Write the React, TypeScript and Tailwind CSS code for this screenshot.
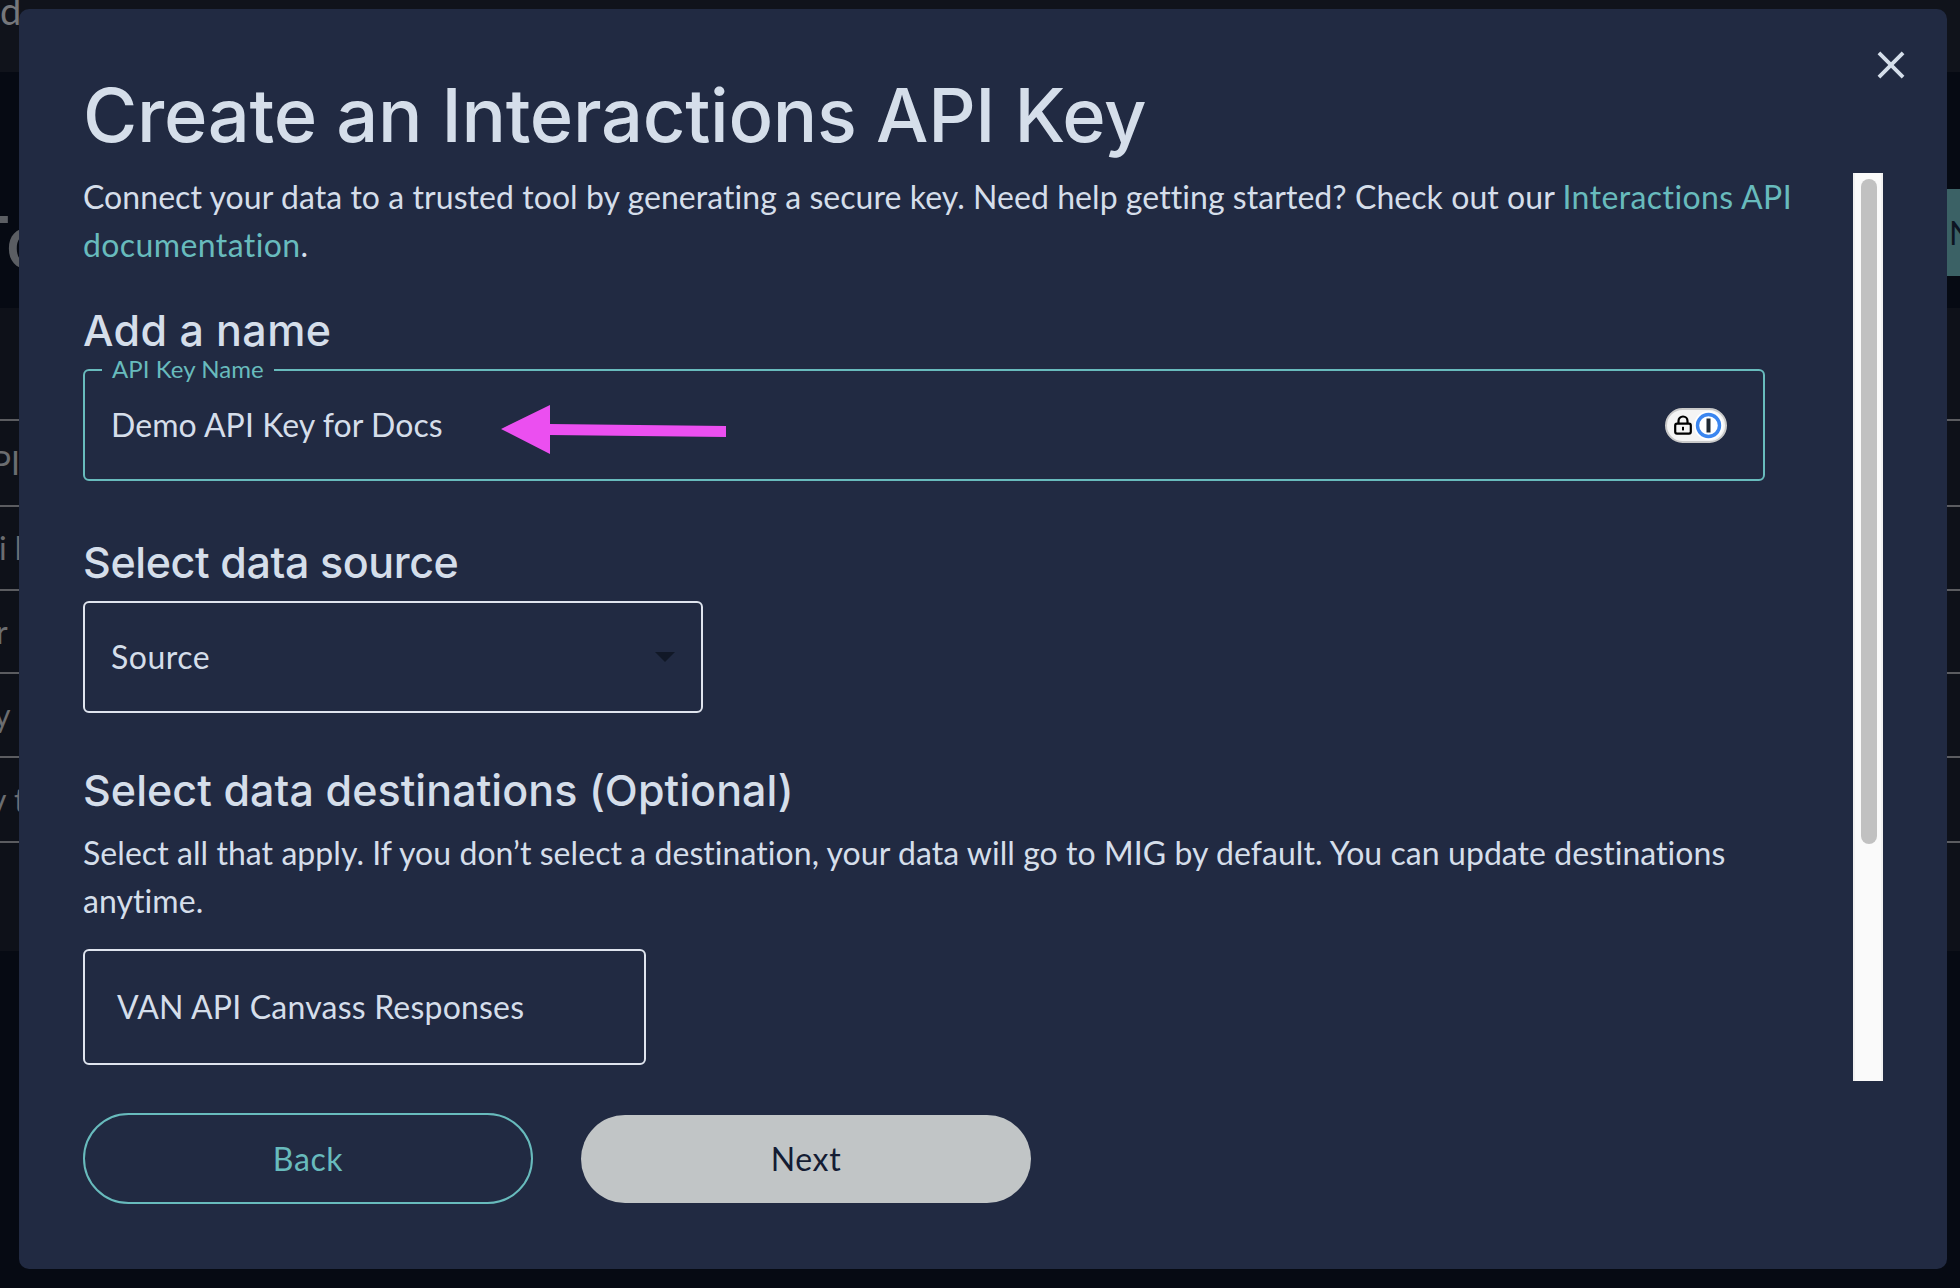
import React from 'react';

const tableRows = [
  { label: 'API', height: 'h-[86px]', offset: '-ml-[30px]' },
  { label: 'i k', height: 'h-[84px]', offset: '-ml-[1px]' },
  { label: 'r', height: 'h-[83px]', offset: '-ml-[4px]' },
  { label: 'y', height: 'h-[84px]', offset: '-ml-[6px]' },
  { label: 'v t', height: 'h-[85px]', offset: '-ml-[10px]' },
];

const OnePasswordPill: React.FC = () => (
  <div className="w-[62px] h-[35px] rounded-full bg-[#f4f4f4] border-2 border-[#c9c9c9] flex items-center justify-between pl-[7px] pr-[2px]">
    <svg width="18" height="20" viewBox="0 0 18 20" fill="none">
      <path d="M4.5 9V6a4.5 4.5 0 0 1 9 0v3" stroke="#000" strokeWidth="2.2" />
      <rect x="1.2" y="8.6" width="15.6" height="10" rx="1.8" stroke="#000" strokeWidth="2.2" />
      <rect x="8" y="11.8" width="2" height="3.6" fill="#000" />
    </svg>
    <svg width="29" height="29" viewBox="0 0 29 29">
      <circle cx="14.5" cy="14.5" r="14.5" fill="#fff" />
      <circle cx="14.5" cy="14.5" r="11" fill="#fff" stroke="#3b86f0" strokeWidth="3.4" />
      <rect x="12.5" y="7.5" width="4" height="14" fill="#1f2933" />
    </svg>
  </div>
);

const App: React.FC = () => {
  return (
    <div className="relative w-[1960px] h-[1288px] overflow-hidden bg-[#060a13] font-['Lato',sans-serif]">
      {/* page behind the dialog */}
      <div className="h-[72px] bg-[#10131b] overflow-hidden">
        <span className="block -mt-[14px] -ml-[19px] text-[38px] leading-[48px] text-[#75777b]">ad</span>
      </div>
      <div className="h-[236px] flex justify-between pt-[117px]">
        <span className="-ml-[36px] mt-[8px] h-[90px] text-[72px] leading-[90px] font-medium text-[#5b5e63] font-['Inter',sans-serif]">To</span>
        <div className="w-[28px] h-[87px] bg-[#3b6165] pl-[17px] overflow-hidden flex items-center">
          <span className="text-[32px] text-[#0d1422]">N</span>
        </div>
      </div>
      <div className="h-[643px] bg-[#0e1119] pt-[111px]">
        {tableRows.map((row) => (
          <div key={row.label} className={`${row.height} border-t-2 border-[#5b5c60] flex items-center overflow-hidden`}>
            <span className={`${row.offset} text-[32px] whitespace-nowrap text-[#6b6d70]`}>{row.label}</span>
          </div>
        ))}
        <div className="border-t-2 border-[#5b5c60]" />
      </div>

      {/* dialog */}
      <div className="absolute left-[19px] top-[9px] w-[1928px] h-[1260px] rounded-[10px] bg-[#212a42] flex flex-col pl-[64px] text-[#d5deea] tracking-[0.06px]">
        <button className="absolute right-[33px] top-[33px] text-[#d5deea]">
          <svg width="46" height="46" viewBox="0 0 24 24" fill="currentColor">
            <path d="M19 6.41 17.59 5 12 10.59 6.41 5 5 6.41 10.59 12 5 17.59 6.41 19 12 13.41 17.59 19 19 17.59 13.41 12z" />
          </svg>
        </button>

        <h1 className="mt-[54px] h-[110px] text-[74px] leading-[104px] font-medium tracking-[-0.3px] text-[#d5deea] font-['Inter',sans-serif]">
          Create an Interactions API Key
        </h1>

        <div className="flex h-[908px]">
          <div className="w-[1770px] shrink-0 overflow-hidden">
            <p className="w-[1720px] text-[32px] leading-[48px]">
              Connect your data to a trusted tool by generating a secure key. Need help getting started? Check out our{' '}
              <a className="text-[#68bbbd] tracking-[0.4px]">Interactions API documentation</a>.
            </p>

            <h2 className="mt-[33px] h-[56px] text-[43px] leading-[56px] font-medium tracking-[0.4px] font-['Inter',sans-serif]">Add a name</h2>
            <div className="relative mt-[11px] w-[1682px] h-[112px] rounded-[6px] border-2 border-[#68bbbd] flex items-center justify-between pl-[26px] pr-[36px]">
              <span className="absolute left-[17px] -top-[17px] px-[10px] bg-[#212a42] text-[24px] leading-[30px] text-[#68bbbd]">API Key Name</span>
              <span className="text-[32px]">Demo API Key for Docs</span>
              <OnePasswordPill />
              <svg className="absolute left-[416px] top-[33px]" width="227" height="51" viewBox="0 0 227 51">
                <path d="M0 25 L49 1 V20 L225 22 V33 L49 31 V50 Z" fill="#eb4ff0" />
              </svg>
            </div>

            <h2 className="mt-[53px] h-[56px] text-[43px] leading-[56px] font-medium tracking-[-0.4px] font-['Inter',sans-serif]">Select data source</h2>
            <div className="mt-[11px] w-[620px] h-[112px] rounded-[6px] border-2 border-[#dfe4ee] flex items-center justify-between pl-[26px] pr-[26px]">
              <span className="text-[32px] tracking-[0.5px]">Source</span>
              <div className="w-0 h-0 border-x-[10px] border-x-transparent border-t-[10px] border-t-[#111827]" />
            </div>

            <h2 className="mt-[49px] h-[56px] text-[43px] leading-[56px] font-medium font-['Inter',sans-serif]">Select data destinations (Optional)</h2>
            <p className="mt-[11px] w-[1720px] text-[32px] leading-[48px]">
              Select all that apply. If you don’t select a destination, your data will go to MIG by default. You can update destinations anytime.
            </p>
            <div className="mt-[24px] w-[563px] h-[116px] rounded-[6px] border-2 border-[#dfe4ee] flex items-center pl-[32px]">
              <span className="text-[32px] tracking-[0.2px]">VAN API Canvass Responses</span>
            </div>
          </div>

          <div className="w-[30px] shrink-0 bg-[#fafafa] border-x-2 border-x-[#f1f1f1] pt-[6px] pl-[6px]">
            <div className="w-[16px] h-[665px] rounded-full bg-[#c1c1c1]" />
          </div>
        </div>

        <div className="flex items-center gap-[48px] mt-[32px]">
          <button className="w-[450px] h-[91px] rounded-full border-2 border-[#68bbbd] text-[32px] tracking-[0.6px] text-[#68bbbd]">Back</button>
          <button className="w-[450px] h-[88px] rounded-full bg-[#c1c5c6] text-[32px] tracking-[0.6px] text-[#141c33]">Next</button>
        </div>
      </div>
    </div>
  );
};

export default App;
